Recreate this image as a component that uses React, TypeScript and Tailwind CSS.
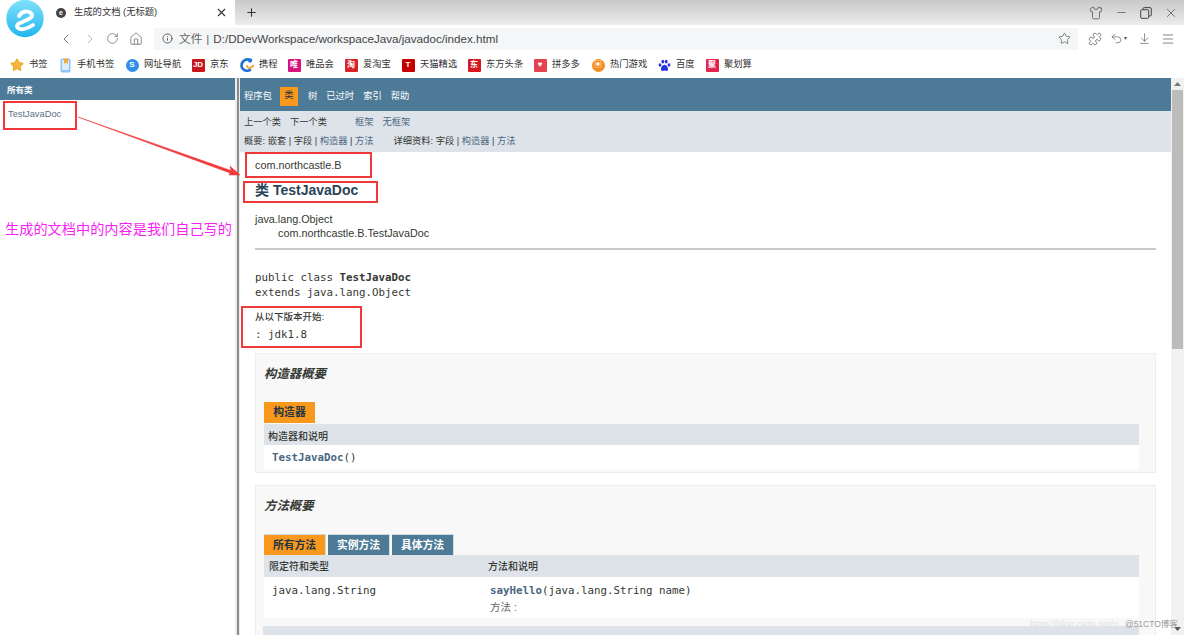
import React from "react";
import { ChevronLeft, ChevronRight, RotateCw, Home, Info, Star, Puzzle, Undo2, ArrowDownToLine, Menu, Plus, X, Minus, Shirt } from "lucide-react";

const sans = "font-['Liberation_Sans','Noto_Sans_CJK_SC',sans-serif]";
const mono = "font-['DejaVu_Sans_Mono','Noto_Sans_CJK_SC',monospace]";

function Logo() {
  return (
    <svg width="46" height="44" viewBox="2 -2 46 44" className="absolute left-[2px] top-[-2px]">
      <defs>
        <linearGradient id="lg" x1="0" y1="0" x2="0" y2="1">
          <stop offset="0" stopColor="#7fe2fa" />
          <stop offset="1" stopColor="#22b6ef" />
        </linearGradient>
      </defs>
      <circle cx="25" cy="18.5" r="21" fill="#ffffff" />
      <circle cx="25" cy="18.5" r="18.7" fill="url(#lg)" />
      <path d="M19 16 C22 10.5 29 10 32 14.5 C33 18 27 20 18 24 C15 27 19 30 24 29 C27 28.5 30 27 33 25" fill="none" stroke="#fff" strokeWidth="3.8" strokeLinecap="round" strokeLinejoin="round" />
    </svg>
  );
}

function Mark({ bg, t, round, color }: { bg: string; t: string; round?: boolean; color?: string }) {
  return (
    <span
      className={`flex h-[13px] w-[13px] shrink-0 items-center justify-center text-[8px] font-bold leading-none ${round ? "rounded-full" : "rounded-[1px]"}`}
      style={{ background: bg, color: color ?? "#fff" }}
    >
      {t}
    </span>
  );
}

function PhoneMark() {
  return (
    <svg width="11" height="15" viewBox="0 0 11 15">
      <rect x="0.5" y="0.5" width="10" height="14" rx="1.5" fill="#8ec5f6" />
      <rect x="2" y="2" width="7" height="10" fill="#dcecfb" />
      <path d="M4 0.5 H8 V6 L6 4.6 L4 6 Z" fill="#f4a93a" />
    </svg>
  );
}

function CtripMark() {
  return (
    <svg width="14" height="14" viewBox="0 0 14 14" fill="none">
      <path d="M11 2 C6 0 1.5 3 1.5 7.5 C1.5 11.5 6 14 10 12" stroke="#1f72d8" strokeWidth="2.6" strokeLinecap="round" />
      <path d="M7 8 C8 11 11 11 13 7.5" stroke="#f2a53a" strokeWidth="2" strokeLinecap="round" />
      <circle cx="10" cy="3" r="1.8" fill="#1f72d8" />
    </svg>
  );
}

function PawMark() {
  return (
    <svg width="13" height="13" viewBox="0 0 13 13" fill="#2932e1">
      <ellipse cx="2" cy="6" rx="1.4" ry="1.8" />
      <ellipse cx="4.8" cy="2.6" rx="1.4" ry="1.9" />
      <ellipse cx="8.2" cy="2.6" rx="1.4" ry="1.9" />
      <ellipse cx="11" cy="6" rx="1.4" ry="1.8" />
      <path d="M6.5 5.8 C8.5 5.8 10.5 9 10 10.8 C9.5 12.6 7.5 11.6 6.5 11.6 C5.5 11.6 3.5 12.6 3 10.8 C2.5 9 4.5 5.8 6.5 5.8 Z" />
    </svg>
  );
}

const bookmarks: [React.ReactNode, string, string][] = [
  [<Star key="a" size={14} fill="#f6b73c" color="#f0a830" />, "书签", "w-[48px]"],
  [<PhoneMark key="b" />, "手机书签", "w-[67px]"],
  [<Mark key="c" bg="#2f8fe8" t="S" round />, "网址导航", "w-[66px]"],
  [<Mark key="d" bg="#c8161d" t="JD" />, "京东", "w-[49px]"],
  [<CtripMark key="e" />, "携程", "w-[47px]"],
  [<Mark key="f" bg="#d6127e" t="唯" />, "唯品会", "w-[57px]"],
  [<Mark key="g" bg="#d8232a" t="淘" />, "爱淘宝", "w-[57px]"],
  [<Mark key="h" bg="#c40000" t="T" />, "天猫精选", "w-[66px]"],
  [<Mark key="i" bg="#d8161d" t="东" />, "东方头条", "w-[66px]"],
  [<Mark key="j" bg="#e5434f" t="♥" />, "拼多多", "w-[58px]"],
  [<Mark key="k" bg="#f78c1e" t="▣" round />, "热门游戏", "w-[66px]"],
  [<PawMark key="l" />, "百度", "w-[48px]"],
  [<Mark key="m" bg="#e0234e" t="聚" />, "聚划算", "w-[60px]"],
];

function Browser() {
  return (
    <div className="h-[78px] shrink-0 bg-white">
      <div className="flex h-[25px] items-stretch">
        <div className="flex w-[235px] items-center bg-white pl-[56px] pr-[7px] text-[9.3px] text-[#333]">
          <span className="mr-[8px] flex h-[10px] w-[10px] items-center justify-center rounded-full bg-[#444] text-[7px] font-bold leading-none text-white">e</span>
          <span className="flex-1">生成的文档 (无标题)</span>
          <X size={13} color="#333" />
        </div>
        <div className="flex flex-1 items-center justify-between bg-gradient-to-b from-[#c9c9c9] to-[#ececec] pl-[10px] pr-[6px]">
          <Plus size={13} color="#333" />
          <div className="flex items-center gap-[12px] text-[#444]">
            <Shirt size={14} strokeWidth={1.2} />
            <Minus size={13} strokeWidth={1.2} />
            <svg width="12" height="12" viewBox="0 0 12 12" fill="none" stroke="currentColor" strokeWidth="1">
              <rect x="0.7" y="2.7" width="8" height="8.6" rx="1.2" />
              <path d="M3 2.6 V1.8 C3 1 3.5 0.6 4.2 0.6 H10 C10.8 0.6 11.3 1.1 11.3 1.8 V8 C11.3 8.6 10.8 9 10 9 H8.8" />
            </svg>
            <X size={14} strokeWidth={1.2} />
          </div>
        </div>
      </div>
      <div className="flex h-[27px] items-center pl-[58px] text-[#666]">
        <ChevronLeft size={16} strokeWidth={1.3} />
        <ChevronRight size={16} strokeWidth={1.3} color="#aaa" className="ml-[8px]" />
        <RotateCw size={13} strokeWidth={1.3} className="ml-[8px]" />
        <Home size={14} strokeWidth={1.3} className="ml-[10px]" />
        <div className="ml-[11px] flex h-[22px] w-[924px] items-center bg-[#f5f6f7] pl-[8px] pr-[7px] text-[11.63px] text-[#444]">
          <Info size={11} strokeWidth={1.8} color="#444" />
          <span className="ml-[6px] pt-[1px] text-[#666]">文件</span>
          <span className="mx-[4px] pt-[1px] text-[#666]">|</span>
          <span className="flex-1 pt-[1px]">D:/DDevWorkspace/workspaceJava/javadoc/index.html</span>
          <Star size={13} strokeWidth={1.2} color="#444" />
        </div>
        <div className="ml-[10px] flex items-center text-[#555]">
          <Puzzle size={14} strokeWidth={1.2} />
          <Undo2 size={13} strokeWidth={1.2} className="ml-[8px]" />
          <span className="ml-[1px] text-[6px]">▾</span>
          <ArrowDownToLine size={13} strokeWidth={1.2} className="ml-[11px]" />
          <Menu size={14} strokeWidth={1.2} className="ml-[10px]" />
        </div>
      </div>
      <div className="flex h-[26px] items-center pl-[10px] text-[9.3px] text-[#333]">
        {bookmarks.map(([icon, label, w]) => (
          <div key={label} className={`flex items-center gap-[5px] ${w}`}>
            <span className="flex w-[14px] justify-center">{icon}</span>
            <span className="whitespace-nowrap">{label}</span>
          </div>
        ))}
      </div>
    </div>
  );
}

function LeftFrame() {
  return (
    <div className="w-[235px] shrink-0 bg-white">
      <div className="flex h-[22px] items-center bg-[#4d7a97] pl-[7px] pt-[3px] text-[8.5px] font-bold text-white">所有类</div>
      <div className="pl-[8px] pt-[8px] text-[9.3px] text-[#5a7186]">TestJavaDoc</div>
    </div>
  );
}

function NavBar() {
  return (
    <>
      <div className="flex h-[33px] items-center bg-[#4d7a97] pl-[4px] pt-[3px] text-[9.3px] text-white">
        <span className="pt-[1px]">程序包</span>
        <span className="ml-[8px] flex h-[19px] w-[18px] items-center justify-center bg-[#f8981d] text-[#253441]">类</span>
        <span className="ml-[10px] pt-[1px]">树</span>
        <span className="ml-[9px] pt-[1px]">已过时</span>
        <span className="ml-[9px] pt-[1px]">索引</span>
        <span className="ml-[9px] pt-[1px]">帮助</span>
      </div>
      <div className="h-[41px] bg-[#dee3e9] pl-[4px] text-[9.25px] text-[#353833]">
        <div className="flex h-[19px] items-end">
          <span>上一个类</span>
          <span className="ml-[9px]">下一个类</span>
          <span className="ml-[28px] text-[#4a6782]">框架</span>
          <span className="ml-[9px] text-[#4a6782]">无框架</span>
        </div>
        <div className="flex h-[19px] items-end">
          <span>概要: 嵌套 | 字段 | <span className="text-[#4a6782]">构造器</span> | <span className="text-[#4a6782]">方法</span></span>
          <span className="ml-[20px]">详细资料: 字段 | <span className="text-[#4a6782]">构造器</span> | <span className="text-[#4a6782]">方法</span></span>
        </div>
      </div>
    </>
  );
}

function TabBtn({ t, on, w }: { t: string; on?: boolean; w: string }) {
  return (
    <span className={`flex h-[21px] items-center justify-center border-t border-r border-[#d0d9e0] text-[10.8px] font-bold ${w} ${on ? "bg-[#f8981d] text-[#253441]" : "bg-[#4d7a97] text-white"}`}>
      {t}
    </span>
  );
}

function Summaries() {
  return (
    <>
      <div className="ml-[15px] mr-[15px] mt-[11px] h-[120px] border border-[#ededed] bg-[#f8f8f8] pl-[8px] pr-[16px]">
        <div className="h-[48px] pt-[13px] text-[12.4px] font-bold italic leading-[15px] text-[#353833]">构造器概要</div>
        <div className="flex h-[22px]">
          <span className="flex h-[21px] w-[51px] items-center justify-center bg-[#f8981d] text-[10.8px] font-bold text-[#253441]">构造器</span>
        </div>
        <div className="flex h-[21px] items-center bg-[#dee3e9] pl-[4px] pt-[3px] text-[10px] font-medium text-[#353833]">构造器和说明</div>
        <div className={`flex h-[24px] items-center bg-white pl-[8px] pt-[2px] text-[10.8px] ${mono}`}>
          <span className="font-bold text-[#4a6782]">TestJavaDoc</span>
          <span className="text-[#353833]">()</span>
        </div>
      </div>
      <div className="ml-[15px] mr-[15px] mt-[12px] h-[200px] border border-[#ededed] bg-[#f8f8f8] pl-[8px] pr-[16px]">
        <div className="h-[48px] pt-[13px] text-[12.4px] font-bold italic leading-[15px] text-[#353833]">方法概要</div>
        <div className="flex h-[21px] gap-[2px]">
          <TabBtn t="所有方法" on w="w-[62px]" />
          <TabBtn t="实例方法" w="w-[62px]" />
          <TabBtn t="具体方法" w="w-[62px]" />
        </div>
        <div className="flex h-[22px] items-center bg-[#dee3e9] text-[10px] font-medium text-[#353833]">
          <span className="w-[224px] pl-[5px]">限定符和类型</span>
          <span>方法和说明</span>
        </div>
        <div className="flex h-[41px] bg-white pt-[7px] text-[10.8px] text-[#353833]">
          <span className={`w-[226px] pl-[8px] leading-[13px] ${mono}`}>java.lang.String</span>
          <div>
            <div className={`leading-[13px] ${mono}`}><span className="font-bold text-[#4a6782]">sayHello</span>(java.lang.String name)</div>
            <div className="mt-[4px] text-[10.5px] leading-[13px] text-[#666]">方法 :</div>
          </div>
        </div>
        <div className="ml-[-1px] mt-[8px] h-[20px] bg-[#dee3e9]" />
      </div>
    </>
  );
}

function RightFrame() {
  return (
    <div className="min-w-0 flex-1 overflow-hidden bg-white text-[#353833]">
      <NavBar />
      <div className="pl-[15px] pr-[15px] pt-[6px] text-[10.8px]">
        <div className="h-[15px] leading-[15px]">com.northcastle.B</div>
        <div className="mt-[6px] h-[22px] text-[14px] font-bold leading-[22px] text-[#2c4557]">类 TestJavaDoc</div>
        <div className="mt-[11px] leading-[14px]">java.lang.Object</div>
        <div className="pl-[23px] leading-[14px]">com.northcastle.B.TestJavaDoc</div>
        <div className="mt-[8px] h-[2px] border-t border-b border-[#c8c8c8] bg-[#e8e8e8]" />
        <div className={`mt-[20px] leading-[15px] ${mono}`}>public class <b>TestJavaDoc</b></div>
        <div className={`leading-[15px] ${mono}`}>extends java.lang.Object</div>
        <div className="mt-[10px] text-[9.5px] font-medium leading-[13px]">从以下版本开始:</div>
        <div className={`mt-[5px] leading-[14px] ${mono}`}>: jdk1.8</div>
      </div>
      <Summaries />
    </div>
  );
}

function Scrollbar() {
  return (
    <div className="flex w-[13px] shrink-0 flex-col bg-[#f1f1f1]">
      <div className="flex h-[12px] items-center justify-center">
        <svg width="7" height="4" viewBox="0 0 7 4"><path d="M3.5 0 L7 4 H0 Z" fill="#777" /></svg>
      </div>
      <div className="mx-[1px] h-[259px] bg-[#bcbcbc]" />
      <div className="flex-1" />
      <div className="flex h-[12px] items-center justify-center">
        <svg width="7" height="4" viewBox="0 0 7 4"><path d="M0 0 H7 L3.5 4 Z" fill="#555" /></svg>
      </div>
    </div>
  );
}

function Box({ c }: { c: string }) {
  return <div className={`absolute border-2 border-[#f0393b] ${c}`} />;
}

export default function App() {
  return (
    <div className={`relative flex h-[635px] w-[1184px] flex-col overflow-hidden bg-white ${sans}`}>
      <Browser />
      <div className="flex min-h-0 flex-1">
        <LeftFrame />
        <div className="flex w-[5px] shrink-0 justify-center bg-[#ececec]">
          <div className="h-full w-[2px] bg-[#8c8c8c]" />
        </div>
        <RightFrame />
        <Scrollbar />
      </div>
      <Logo />
      <div className="absolute left-[5px] top-[220px] text-[14.2px] leading-[18px] text-[#f91ff5]">生成的文档中的内容是我们自己写的</div>
      <Box c="left-[3px] top-[101px] h-[29px] w-[74px]" />
      <Box c="left-[245px] top-[152px] h-[26px] w-[127px]" />
      <Box c="left-[243px] top-[181px] h-[22px] w-[135px]" />
      <Box c="left-[241px] top-[306px] h-[42px] w-[121px]" />
      <svg className="absolute left-0 top-0" width="1184" height="635" viewBox="0 0 1184 635" fill="none">
        <path d="M78 117 L231 170.5 L230 166 L240 175 L229 175 L230 173 Z" fill="#f0393b" stroke="#f0393b" strokeWidth="0.5" />
      </svg>
      <div className="absolute left-[1030px] top-[620px] w-[95px] overflow-hidden whitespace-nowrap text-[9px] leading-none text-[#dfe2e6]">https://blog.csdn.net/q</div>
      <div className="absolute left-[1125px] top-[620px] whitespace-nowrap text-[8.5px] leading-none text-[#9a9a9a]">@51CTO博客</div>
    </div>
  );
}
